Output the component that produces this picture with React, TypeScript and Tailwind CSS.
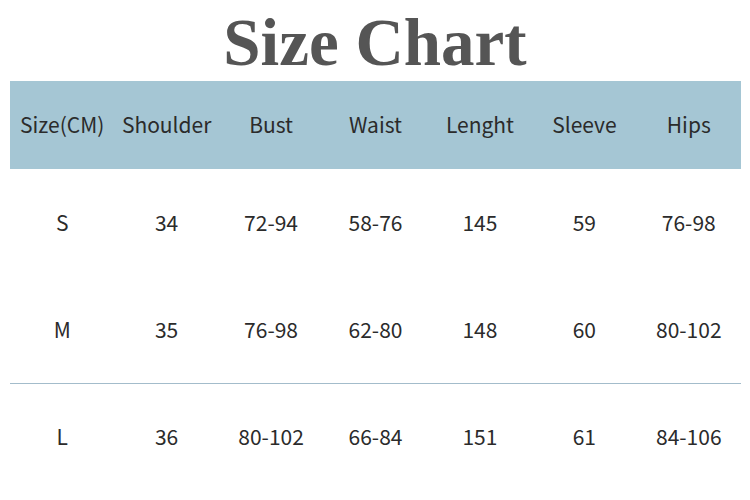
const headers = ['Size(CM)', 'Shoulder', 'Bust', 'Waist', 'Lenght', 'Sleeve', 'Hips'];

const rows = [
  ['S', '34', '72-94', '58-76', '145', '59', '76-98'],
  ['M', '35', '76-98', '62-80', '148', '60', '80-102'],
  ['L', '36', '80-102', '66-84', '151', '61', '84-106'],
];

export default function App() {
  return (
    <div className="w-[750px] h-[500px] bg-white overflow-hidden">
      <h1 className="h-[81px] flex items-center justify-center text-[67px] leading-none font-bold text-[#555555] font-['Liberation_Serif',serif] pt-1">
        Size Chart
      </h1>
      <div className="mx-[10px] w-[731px] font-['Noto_Sans_CJK_SC','Noto_Sans',sans-serif] text-[21px] text-[#2b2b2b]">
        <div className="grid grid-cols-7 h-[88px] items-center bg-[#a5c6d4]">
          {headers.map((h) => (
            <div key={h} className="text-center">{h}</div>
          ))}
        </div>
        {rows.map((r, i) => (
          <div
            key={r[0]}
            className={`grid grid-cols-7 h-[107px] items-center ${i === 2 ? 'border-t border-[#a3bccb]' : ''}`}
          >
            {r.map((c, j) => (
              <div key={j} className="text-center">{c}</div>
            ))}
          </div>
        ))}
      </div>
    </div>
  );
}
